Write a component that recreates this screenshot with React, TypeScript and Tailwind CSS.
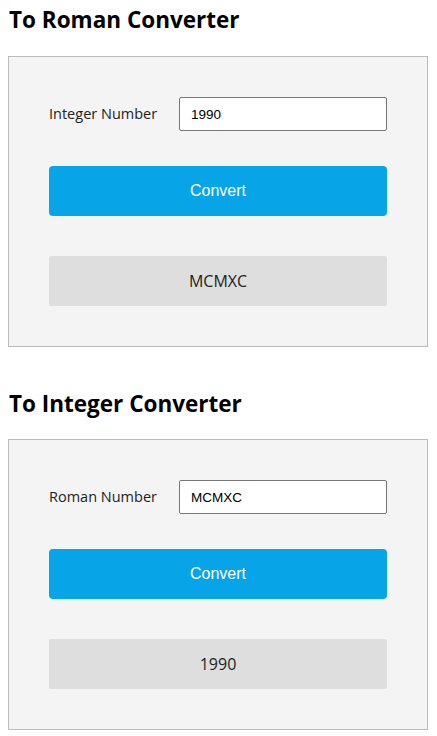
import React from "react";

function Card({ label, value, result }: { label: string; value: string; result: string }) {
  return (
    <div className="ml-2 w-[420px] border border-[#bbbbbb] bg-[#f4f4f4] px-10 py-10">
      <div className="flex items-center">
        <label className="w-[130px] text-[14.5px] text-[#222]">{label}</label>
        <input
          readOnly
          value={value}
          className="h-[34px] w-[208px] border border-[#767676] bg-white px-[11px] text-[13.5px] text-black outline-none rounded-[2px]"
          style={{ fontFamily: '"Liberation Sans", Arial, sans-serif' }}
        />
      </div>
      <button
        className="mt-[35px] h-[50px] w-full rounded-[4px] bg-[#08a4e8] text-[16px] text-white"
        style={{ fontFamily: '"Liberation Sans", Arial, sans-serif' }}
      >
        Convert
      </button>
      <div className="mt-10 flex h-[50px] items-center justify-center rounded-[2px] bg-[#dedede] text-[16px] text-[#222]">
        {result}
      </div>
    </div>
  );
}

export default function App() {
  return (
    <div className="min-h-[736px] bg-white" style={{ fontFamily: '"Open Sans", "Noto Sans", sans-serif' }}>
      <h2 className="px-[9px] pt-[4px] pb-[20px] text-[22.5px] font-bold leading-[32px] text-black">To Roman Converter</h2>
      <Card label="Integer Number" value="1990" result="MCMXC" />
      <h2 className="px-[9px] pt-[41px] pb-[19px] text-[22.5px] font-bold leading-[32px] text-black">To Integer Converter</h2>
      <Card label="Roman Number" value="MCMXC" result="1990" />
    </div>
  );
}
